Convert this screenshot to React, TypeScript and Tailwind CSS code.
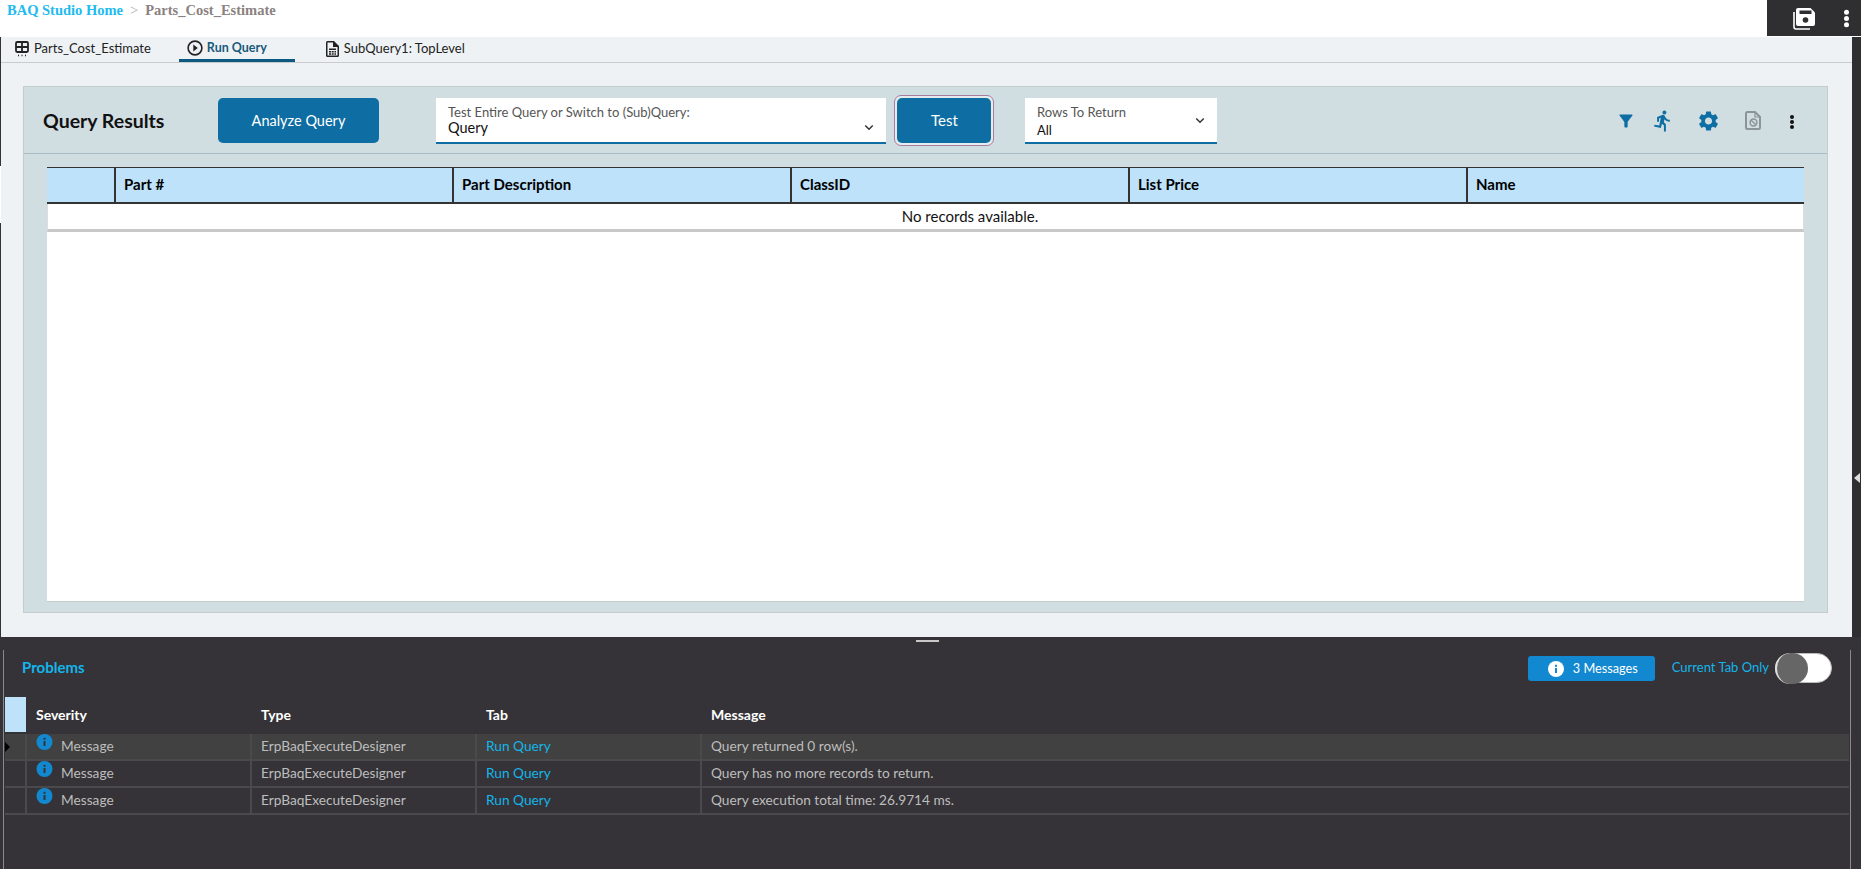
const UI_FONT = "font-['Lato','Noto_Sans',sans-serif]";

const COLUMNS = ["Part #", "Part Description", "ClassID", "List Price", "Name"];

const MESSAGES = [
  { text: "Query returned 0 row(s).", active: true },
  { text: "Query has no more records to return.", active: false },
  { text: "Query execution total time: 26.9714 ms.", active: false },
];

function Chevron({ className }: { className: string }) {
  return (
    <svg viewBox="0 0 12 8" className={className} fill="none" stroke="#333" strokeWidth="1.8">
      <path d="M1.5 1.5 6 6l4.5-4.5" />
    </svg>
  );
}

function Dots({ color, className }: { color: string; className: string }) {
  return (
    <svg viewBox="0 0 4 14" className={className} fill={color}>
      <circle cx="2" cy="2" r="2" />
      <circle cx="2" cy="7" r="2" />
      <circle cx="2" cy="12" r="2" />
    </svg>
  );
}

function InfoDot({ bg, fg, className }: { bg: string; fg: string; className: string }) {
  return (
    <svg viewBox="0 0 16 16" className={className}>
      <circle cx="8" cy="8" r="8" fill={bg} />
      <rect x="7" y="7" width="2" height="5" fill={fg} />
      <rect x="7" y="3.8" width="2" height="2" fill={fg} />
    </svg>
  );
}

function TableIcon() {
  return (
    <svg viewBox="0 0 14 16" className="h-[16px] w-[14px]" fill="none" stroke="#222" strokeWidth="1.8">
      <rect x="1" y="1" width="12" height="10" rx="1.2" />
      <path d="M1 6h12M7 1v10" />
      <path d="M3 14.5h1M6.5 14.5h1M10 14.5h1" strokeWidth="1.6" />
    </svg>
  );
}

function RunIcon() {
  return (
    <svg viewBox="0 0 16 16" className="h-[16px] w-[16px]">
      <circle cx="8" cy="8" r="6.9" fill="none" stroke="#222" strokeWidth="1.6" />
      <path d="M6.3 4.6 10.8 8l-4.5 3.4z" fill="#222" />
    </svg>
  );
}

function DocCalcIcon() {
  return (
    <svg viewBox="0 0 13 16" className="h-[16px] w-[13px]" fill="#222">
      <path d="M1.5 0H8l5 5v9.5a1.5 1.5 0 0 1-1.5 1.5h-10A1.5 1.5 0 0 1 0 14.500v-13A1.500 1.500 0 0 1 1.500 0zM1.500 1.500v13h10V6H7V1.500z" />
      <path d="M3 7.500h7v1.500H3zM3 10h2v1.500H3zM5.700 10h2v1.500h-2zM8.400 10h1.600v1.500H8.400zM3 12.300h2v1.400H3zM5.700 12.300h2v1.400h-2zM8.400 12.300h1.600v1.400H8.400z" />
    </svg>
  );
}

function SaveIcon() {
  return (
    <svg viewBox="0 0 24 23" className="h-[23px] w-[24px]">
      <path d="M2 5v15a2 2 0 0 0 2 2h14" fill="none" stroke="#fff" strokeWidth="1.600" />
      <path d="M6 1h12.500L23 5.500V17a2 2 0 0 1-2 2H6a2 2 0 0 1-2-2V3a2 2 0 0 1 2-2z" fill="#fff" />
      <rect x="7.500" y="3.500" width="12" height="3.500" fill="#2f2e30" />
      <circle cx="13.500" cy="13" r="2.800" fill="#2f2e30" />
    </svg>
  );
}

function DisabledDocIcon() {
  return (
    <svg viewBox="0 0 16 19" className="h-[19px] w-[16px]" fill="none" stroke="#8a9499" strokeWidth="2">
      <path d="M2.500 1H10l5 5v10.500a1.500 1.500 0 0 1-1.500 1.500h-11A1.500 1.500 0 0 1 1 16.500v-14A1.500 1.500 0 0 1 2.500 1z" />
      <path d="M10 1v5h5" strokeWidth="1.200" />
      <circle cx="8.500" cy="11.500" r="3.400" strokeWidth="1.500" />
      <path d="m6.200 9.200 4.600 4.600" strokeWidth="1.300" />
    </svg>
  );
}

function ToolIcons() {
  return (
    <div className="ml-auto flex items-center pr-[33px]">
      <svg viewBox="3.500 3.500 17 17" className="h-[14px] w-[14px]" fill="#0e6ea3">
        <path d="M4.250 5.610C6.270 8.200 10 13 10 13v6c0 .55.45 1 1 1h2c.55 0 1-.45 1-1v-6s3.720-4.800 5.740-7.390A1 1 0 0 0 18.950 4H5.040a1 1 0 0 0-.79 1.610z" />
      </svg>
      <svg viewBox="3 1 16 22.500" className="ml-[21px] h-[22px] w-[16px]" fill="#0e6ea3">
        <path d="M13.490 5.480c1.100 0 2-.9 2-2s-.9-2-2-2-2 .9-2 2 .9 2 2 2zm-3.600 13.900l1-4.400 2.100 2v6h2v-7.500l-2.100-2 .6-3c1.300 1.500 3.300 2.500 5.500 2.500v-2c-1.900 0-3.500-1-4.300-2.400l-1-1.600c-.4-.6-1-1-1.700-1-.3 0-.5.1-.8.1l-5.200 2.200v4.700h2v-3.400l1.800-.7-1.600 8.100-4.900-1-.4 2 7 1.400z" />
      </svg>
      <svg viewBox="2.600 2 18.800 20" className="ml-[29px] h-[20px] w-[19px]" fill="#0e6ea3">
        <path d="M19.140 12.940c.04-.3.06-.61.06-.94 0-.32-.02-.64-.07-.94l2.030-1.580c.18-.14.23-.41.12-.61l-1.920-3.320c-.12-.22-.37-.29-.59-.22l-2.390.96c-.5-.38-1.030-.7-1.620-.94l-.36-2.540c-.04-.24-.24-.41-.48-.41h-3.840c-.24 0-.43.17-.47.41l-.36 2.540c-.59.24-1.130.57-1.620.94l-2.390-.96c-.22-.08-.47 0-.59.22L2.740 8.870c-.12.21-.08.47.12.61l2.030 1.580c-.05.3-.09.63-.09.94s.02.64.07.94l-2.030 1.580c-.18.14-.23.41-.12.61l1.920 3.320c.12.22.37.29.59.22l2.390-.96c.5.38 1.030.7 1.620.94l.36 2.540c.05.24.24.41.48.41h3.840c.24 0 .44-.17.47-.41l.36-2.540c.59-.24 1.130-.56 1.620-.94l2.390.96c.22.08.47 0 .59-.22l1.920-3.320c.12-.22.07-.47-.12-.61l-2.010-1.580zM12 15.600c-1.980 0-3.600-1.620-3.600-3.600s1.620-3.600 3.600-3.600 3.600 1.620 3.600 3.600-1.620 3.600-3.600 3.600z" />
      </svg>
      <div className="ml-[27px]">
        <DisabledDocIcon />
      </div>
      <div className="ml-[29px] pt-[3px]">
        <Dots color="#111" className="h-[14px] w-[4px]" />
      </div>
    </div>
  );
}

function QueryTable() {
  return (
    <div className="mx-[23px] mt-[13px] flex h-[435px] flex-col bg-white border-b border-[#c4cccc]">
      <div className="flex h-[37px] border-t border-b-2 border-[#333] bg-[#bde2fa] pb-[2px] text-[15px] font-bold text-black">
        <div className="-mb-[2px] w-[69px] border-r-2 border-[#333]" />
        {COLUMNS.map((col, i) => (
          <div
            key={col}
            className={`-mb-[2px] flex w-[338px] items-center pb-[2px] pl-[8px] ${i < 4 ? "border-r-2 border-[#333]" : "flex-1"}`}
          >
            {col}
          </div>
        ))}
      </div>
      <div className="flex h-[28px] items-center justify-center border-b-[3px] border-x border-b-[#c8c8c8] border-x-[#ddd] pl-[89px] text-[15px] text-[#111]">
        No records available.
      </div>
    </div>
  );
}

function QueryPanel() {
  return (
    <div className="ml-[22px] mr-[24px] mt-[23px] h-[527px] border border-[#c4cccc] bg-[#d0dde1]">
      <div className="flex h-[67px] items-start border-b border-[#a9bcc4] pt-[11px]">
        <div className="flex h-[45px] w-[175px] items-center pl-[19px] text-[19.5px] font-bold text-[#111]">
          Query Results
        </div>
        <button className="ml-[19px] h-[45px] w-[161px] rounded-[5px] bg-[#0e6ea3] text-[14.5px] text-white">
          Analyze Query
        </button>
        <div className="relative ml-[57px] h-[46px] w-[450px] border-b-2 border-[#0e6ea3] bg-white pl-[12px] pt-[6px] leading-none">
          <div className="text-[13px] leading-[16px] text-[#555]">Test Entire Query or Switch to (Sub)Query:</div>
          <div className="text-[14.5px] leading-[15px] text-[#111]">Query</div>
          <Chevron className="absolute right-[12px] top-[26px] h-[7px] w-[10px]" />
        </div>
        <button className="ml-[8px] -mt-[3px] h-[51px] w-[100px] rounded-[7px] border border-[#a77a9e] bg-[#e4ecef] p-[2px] text-[15px] text-white">
          <span className="flex h-full w-full items-center justify-center rounded-[5px] bg-[#0e6ea3] pl-[1px]">Test</span>
        </button>
        <div className="relative ml-[31px] h-[46px] w-[192px] border-b-2 border-[#0e6ea3] bg-white pl-[12px] pt-[6px]">
          <div className="text-[13px] leading-[17px] text-[#555]">Rows To Return</div>
          <div className="text-[13px] leading-[19px] text-[#111]">All</div>
          <Chevron className="absolute right-[12px] top-[19px] h-[7px] w-[10px]" />
        </div>
        <div className="flex h-[45px] flex-1 items-center">
          <ToolIcons />
        </div>
      </div>
      <QueryTable />
    </div>
  );
}

function ProblemsPanel() {
  return (
    <div className="relative h-[232px] shrink-0 bg-[#353337] pl-[5px] pr-[12px]">
      <div className="flex justify-center pt-[3px]">
        <div className="h-[2px] w-[23px] bg-[#c8c8c8]" />
      </div>
      {/* thin light rules along both sides of the panel */}
      <div className="absolute bottom-0 left-[3px] top-[13px] w-px bg-[#8a8a8a]" />
      <div className="absolute bottom-0 right-[10px] top-[13px] w-px bg-[#8a8a8a]" />
      <div className="flex h-[49px] items-start pr-[17px] pt-[11px]">
        <div className="flex h-[28px] items-center pl-[17px] text-[15px] font-bold text-[#14b5ea]">Problems</div>
        <div className="ml-auto mt-[3px] flex h-[25px] w-[127px] items-center rounded-[3px] bg-[#1188d0] pl-[20px] text-[12.7px] text-white">
          <InfoDot bg="#fff" fg="#1188d0" className="h-[16px] w-[16px]" />
          <span className="ml-[9px]">3 Messages</span>
        </div>
        <div className="ml-[17px] flex h-[30px] items-center text-[13px] text-[#14b5ea]">Current Tab Only</div>
        <div className="relative ml-[6px] h-[30px] w-[57px] rounded-full border border-[#bbb] bg-white">
          <div className="absolute -left-px -top-px h-[31px] w-[33px] rounded-full border-l-2 border-[#ddd] bg-[#666]" />
        </div>
      </div>
      <div className="mt-[6px] flex h-[37px]">
        <div className="h-[35px] w-[21px] bg-[#bde2fa]" />
        <div className="flex h-[35px] items-center pb-[1px] text-[14px] font-bold text-white">
          <span className="w-[225px] pl-[10px]">Severity</span>
          <span className="w-[225px] pl-[10px]">Type</span>
          <span className="w-[225px] pl-[10px]">Tab</span>
          <span className="pl-[10px]">Message</span>
        </div>
      </div>
      {MESSAGES.map((m) => (
        <div
          key={m.text}
          className={`flex h-[27px] border-b-2 border-[#4a4a4c] text-[13.7px] text-[#bdbdbd] first:border-t ${m.active ? "bg-[#414141]" : ""}`}
        >
          <div className="flex w-[22px] items-center border-r-2 border-[#4a4a4c]">
            {m.active && <div className="h-0 w-0 border-y-[5px] border-l-[5px] border-y-transparent border-l-black" />}
          </div>
          <div className="flex w-[225px] border-r-2 border-[#4a4a4c] pl-[9px]">
            <InfoDot bg="#1188d0" fg="#353337" className="h-[16px] w-[17px]" />
            <span className="ml-[8px] self-center pb-[1px]">Message</span>
          </div>
          <div className="flex w-[225px] items-center border-r-2 border-[#4a4a4c] pb-[1px] pl-[9px]">ErpBaqExecuteDesigner</div>
          <div className="flex w-[225px] items-center border-r-2 border-[#4a4a4c] pb-[1px] pl-[9px] text-[#14b5ea]">Run Query</div>
          <div className="flex flex-1 items-center pb-[1px] pl-[9px]">{m.text}</div>
        </div>
      ))}
    </div>
  );
}

export default function App() {
  return (
    <div className={`flex h-[869px] w-[1861px] flex-col overflow-hidden bg-white ${UI_FONT}`}>
      <div className="flex h-[37px] shrink-0 items-start">
        <div className="flex h-[22px] items-center pl-[7px] font-['Liberation_Serif',serif] text-[14.5px] font-bold">
          <span className="text-[#22bbee]">BAQ Studio Home</span>
          <span className="ml-[7px] font-normal text-[#aaa]">&gt;</span>
          <span className="ml-[7px] text-[#8a8280]">Parts_Cost_Estimate</span>
        </div>
        <div className="ml-auto flex h-[36px] w-[94px] items-center bg-[#2f2e30] pl-[25px]">
          <SaveIcon />
          <Dots color="#fff" className="ml-[28px] h-[19px] w-[5px]" />
        </div>
      </div>
      <div className="flex min-h-0 flex-1">
        <div className="flex w-px flex-col bg-[#333]">
          <div className="mt-[129px] h-[57px] bg-white" />
        </div>
        <div className="flex min-w-0 flex-1 flex-col bg-[#eef2f5]">
          <div className="flex h-[26px] shrink-0 border-b border-[#c8cccc] text-[13px] text-[#222]">
            <div className="flex items-center pb-[1px] pl-[14px]">
              <TableIcon />
              <span className="ml-[5px]">Parts_Cost_Estimate</span>
            </div>
            <div className="ml-[28px] flex h-[25px] w-[116px] items-center border-b-[3px] border-[#0c5a80] pl-[8px] text-[12.5px] font-bold text-[#1a5a7a]">
              <RunIcon />
              <span className="ml-[4px]">Run Query</span>
            </div>
            <div className="ml-[31px] flex items-center pb-[1px]">
              <DocCalcIcon />
              <span className="ml-[5px]">SubQuery1: TopLevel</span>
            </div>
          </div>
          <QueryPanel />
        </div>
        <div className="flex w-[9px] items-start justify-center bg-[#2f2e30] pt-[436px]">
          <div className="h-0 w-0 border-y-[5px] border-r-[6px] border-y-transparent border-r-[#ddd]" />
        </div>
      </div>
      <ProblemsPanel />
    </div>
  );
}
